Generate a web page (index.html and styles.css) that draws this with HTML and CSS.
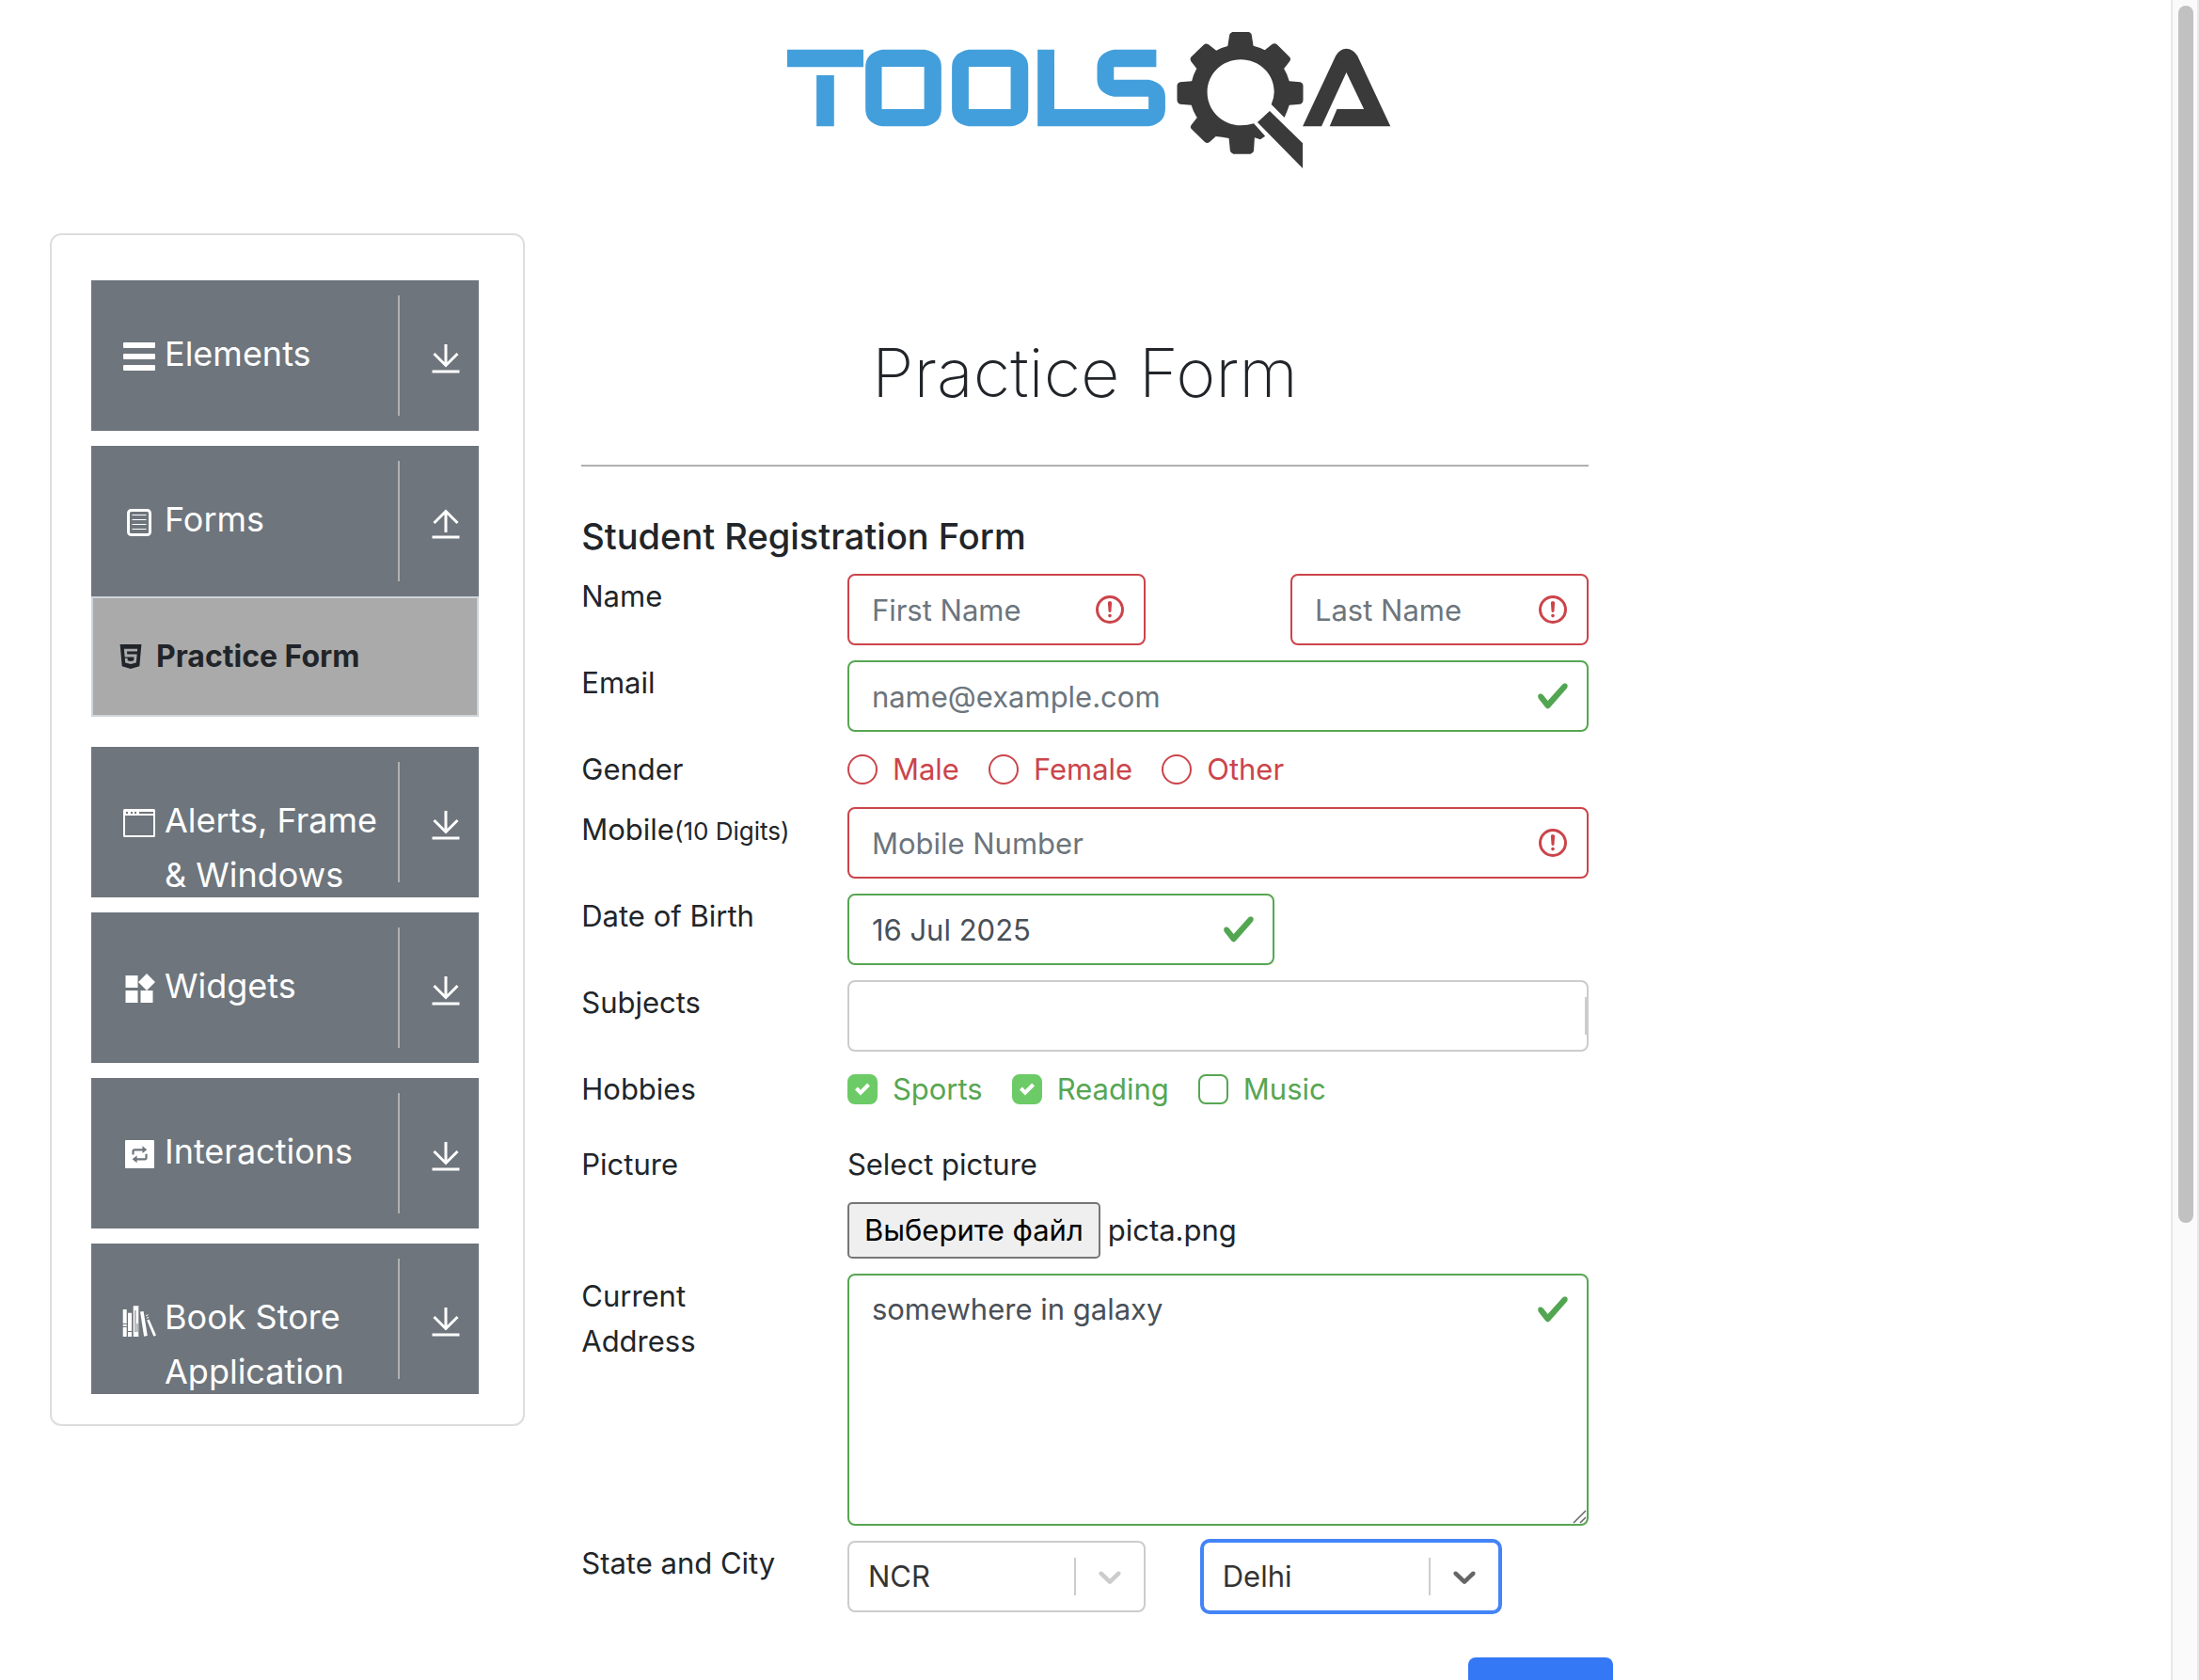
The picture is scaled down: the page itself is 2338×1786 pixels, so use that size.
FILE: index.html
```html
<!DOCTYPE html>
<html lang="en">
<head>
<meta charset="utf-8">
<title>Practice Form</title>
<link rel="stylesheet" href="styles.css">
</head>
<body>
<div class="page">
  <header class="site-header">
    <a href="#" aria-label="ToolsQA home">
      <svg class="logo" viewBox="0 0 1568 540" preserveAspectRatio="none" aria-hidden="true">
        <g fill="#439fdb">
          <path d="M39 98h187v56H39zM111 180h43v163h-43z"/>
          <path fill-rule="evenodd" d="M272 98h104q41 10 41 56v133q0 46-41 56H272q-41-10-41-56V154q0-46 41-56zM271 153v135h104V153z"/>
          <path fill-rule="evenodd" d="M484 98h104q42 10 42 56v133q0 46-42 56H484q-41-10-41-56V154q0-46 41-56zM484 153v135h103V153z"/>
          <path d="M653 98h41v190h231v-40h-85q-41-10-41-56v-38q0-46 41-56h104v56H840v40h85q41 10 41 56v37q0 46-41 56H653z"/>
        </g>
        <g fill="#3a3a3a">
          <path fill-rule="evenodd" d="M1128 42h43q7 3 7 12l4 32q16 5 28 14l18-19q7-5 13 2l29 38q6 8 0 16l-13 22q9 19 13 40l27 3q7 3 7 12v45q0 10-7 13l-27 3q-5 20-12 40l-32-42q7-22 7-40c0-58-37-103-82-103s-82 45-82 104 37 106 82 106q17 0 32-6l28 40-12 11-14-6-2 42q-1 8-8 10h-42q-7-2-8-10l-3-40q-17-5-32-6l-16 19q-6 4-11-1l-33-42q-4-6 0-13l14-23q-9-17-14-40l-28-3q-7-3-7-13v-45q0-9 7-12l29-3q4-22 12-40l-13-22q-5-8 0-16l30-38q6-6 12-1l19 19q12-9 28-14l4-32q0-9 7-12z"/>
          <path d="M1222 294l81 103v80l-111-147z"/>
          <path d="M1303 343l81-225q10-23 26-23t27 23l81 225h-149l18-55h66l-43-117-61 172z"/>
        </g>
      </svg>
    </a>
  </header>

  <main class="layout">
    <nav class="col" aria-label="Sections">
      <div class="accordion">
        <div class="group">
          <button class="group-head" type="button">
            <svg class="icon" viewBox="0 0 36 36"><path fill="currentColor" d="M2 3h32q1 0 1 1v4q0 1-1 1H2q-1 0-1-1V4q0-1 1-1zm0 12h32q1 0 1 1v4q0 1-1 1H2q-1 0-1-1v-4q0-1 1-1zm0 12h32q1 0 1 1v4q0 1-1 1H2q-1 0-1-1v-4q0-1 1-1z"/></svg>
            <span class="group-name">Elements</span>
            <span class="group-toggle"><svg class="icon" viewBox="0 0 36 36"><path class="line" d="M18 5v22M5.500 15 18 27.500 30.500 15M3.500 34h29"/></svg></span>
          </button>
        </div>
        <div class="group">
          <button class="group-head" type="button">
            <svg class="icon" viewBox="0 0 36 36"><rect class="line" x="6.500" y="5.500" width="23" height="26" rx="3"/><path class="hair" d="M10.500 10.500h15M10.500 15.500h15M10.500 20.500h15M10.500 25.500h15"/></svg>
            <span class="group-name">Forms</span>
            <span class="group-toggle"><svg class="icon" viewBox="0 0 36 36"><path class="line" d="M18 29V7M5.500 19 18 6.500 30.500 19M3.500 34h29"/></svg></span>
          </button>
          <a class="group-item" href="#">
            <svg class="icon-small" viewBox="0 0 24 24"><path fill="currentColor" d="M1.500 0h21l-1.910 21.563L11.977 24l-8.564-2.438L1.500 0zm7.031 9.750l-.232-2.718 10.059.003.230-2.622L5.412 4.410l.698 8.010h9.126l-.326 3.426-2.910.804-2.955-.810-.188-2.110H6.248l.330 4.171L12 19.351l5.379-1.443.744-8.157H8.531z"/></svg>
            Practice Form
          </a>
        </div>
        <div class="group">
          <button class="group-head" type="button">
            <svg class="icon" viewBox="0 0 36 36"><path fill="currentColor" fill-rule="evenodd" d="M2.500 3h31q1.500 0 1.500 1.500v27q0 1.500-1.500 1.500h-31Q1 33 1 31.500v-27Q1 3 2.500 3zM3 10v21h30V10zM4 6v2h2V6zM9 6v2h2V6zM13 6v2h2V6zM18 6v2h15V6z"/></svg>
            <span class="group-name">Alerts, Frame &amp; Windows</span>
            <span class="group-toggle"><svg class="icon" viewBox="0 0 36 36"><path class="line" d="M18 5v22M5.500 15 18 27.500 30.500 15M3.500 34h29"/></svg></span>
          </button>
        </div>
        <div class="group">
          <button class="group-head" type="button">
            <svg class="icon" viewBox="0 0 36 36"><path fill="currentColor" d="M3.500 4h13v13h-13zM3.500 20h13v13h-13zM19.500 20h13v13h-13zM26 2l9 9-9 9-9-9z"/></svg>
            <span class="group-name">Widgets</span>
            <span class="group-toggle"><svg class="icon" viewBox="0 0 36 36"><path class="line" d="M18 5v22M5.500 15 18 27.500 30.500 15M3.500 34h29"/></svg></span>
          </button>
        </div>
        <div class="group">
          <button class="group-head" type="button">
            <svg class="icon" viewBox="0 0 36 36"><rect x="3" y="3" width="31" height="30" rx="1" fill="currentColor"/><path d="M11.500 18.500V15q0-1.700 1.700-1.700H22M25.500 17.700v4q0 1.600-1.600 1.600H15" fill="none" stroke="#6e757c" stroke-width="2.200"/><path fill="#6e757c" d="M21.500 9.300l4.700 4-4.700 3.800zM15.600 19.400l-5 3.900 5 3.900z"/></svg>
            <span class="group-name">Interactions</span>
            <span class="group-toggle"><svg class="icon" viewBox="0 0 36 36"><path class="line" d="M18 5v22M5.500 15 18 27.500 30.500 15M3.500 34h29"/></svg></span>
          </button>
        </div>
        <div class="group">
          <button class="group-head" type="button">
            <svg class="icon" viewBox="0 0 36 36"><path fill="currentColor" d="M.7 7h4v29h-4zM6 10.700h4V36H6zM11.700 3.300h5.600V36h-5.600zM19 9.600l3.600-.6 4.200 26-3.700.8zM26.200 18.600l2.300-1.200 7.500 17.100-2.600 1.200z"/><path fill="none" stroke="currentColor" d="M25 14l2.500-1.300M25.800 16.400l2.400-1.200"/><path fill="none" stroke="#6e757c" d="M0 22.500h5M0 25.500h5M5.500 30.500h5M13.900 8v23M16 22v9"/></svg>
            <span class="group-name">Book Store Application</span>
            <span class="group-toggle"><svg class="icon" viewBox="0 0 36 36"><path class="line" d="M18 5v22M5.500 15 18 27.500 30.500 15M3.500 34h29"/></svg></span>
          </button>
        </div>
      </div>
    </nav>

    <section class="col content">
      <h1>Practice Form</h1>
      <form class="form">
        <h2>Student Registration Form</h2>
        <div class="row">
          <label class="span-3" for="first">Name</label>
          <div class="span-4"><input class="control invalid" id="first" type="text" placeholder="First Name"></div>
          <div class="span-4 push"><input class="control invalid" type="text" placeholder="Last Name" aria-label="Last Name"></div>
        </div>
        <div class="row">
          <label class="span-3" for="email">Email</label>
          <div class="span-9"><input class="control valid" id="email" type="email" placeholder="name@example.com"></div>
        </div>
        <div class="row" role="radiogroup" aria-labelledby="gender">
          <span class="span-3" id="gender">Gender</span>
          <div class="span-9 choices bad">
            <label class="choice"><input type="radio" name="gender">Male</label>
            <label class="choice"><input type="radio" name="gender">Female</label>
            <label class="choice"><input type="radio" name="gender">Other</label>
          </div>
        </div>
        <div class="row">
          <label class="span-3" for="mobile">Mobile<small>(10 Digits)</small></label>
          <div class="span-9"><input class="control invalid" id="mobile" type="tel" placeholder="Mobile Number"></div>
        </div>
        <div class="row">
          <label class="span-3" for="dob">Date of Birth</label>
          <div class="span-9"><input class="control valid date" id="dob" type="text" value="16 Jul 2025"></div>
        </div>
        <div class="row">
          <label class="span-3" for="subjects">Subjects</label>
          <div class="span-9"><div class="tags"><input id="subjects" type="text"></div></div>
        </div>
        <div class="row" role="group" aria-labelledby="hobbies">
          <span class="span-3" id="hobbies">Hobbies</span>
          <div class="span-9 choices good">
            <label class="choice"><input type="checkbox" checked>Sports</label>
            <label class="choice"><input type="checkbox" checked>Reading</label>
            <label class="choice"><input type="checkbox">Music</label>
          </div>
        </div>
        <div class="row picture">
          <span class="span-3">Picture</span>
          <div class="span-9">
            <label for="file">Select picture</label>
            <div class="file"><button id="file" type="button">Выберите файл</button><span>picta.png</span></div>
          </div>
        </div>
        <div class="row">
          <label class="span-3 narrow" for="address">Current Address</label>
          <div class="span-9"><textarea class="control valid" id="address">somewhere in galaxy</textarea></div>
        </div>
        <div class="row">
          <label class="span-3" for="state">State and City</label>
          <div class="span-4"><select class="select" id="state"><option>NCR</option></select></div>
          <div class="span-4"><select class="select active" aria-label="City"><option>Delhi</option></select></div>
        </div>
        <div class="actions"><button class="submit" type="submit" aria-label="Submit"></button></div>
      </form>
    </section>
  </main>
</div>
<div class="scrollbar" aria-hidden="true"><div class="thumb"></div></div>
</body>
</html>
```
FILE: styles.css
```css
* { box-sizing: border-box; }

body {
  margin: 0;
  display: flex;
  height: 100vh;
  overflow: hidden;
  background: #fff;
  color: #212529;
  font: 31px/48px Inter, "Liberation Sans", sans-serif;
}

input, select, textarea, button { font: inherit; color: inherit; margin: 0; }

.page { flex: 1; min-width: 0; height: 100%; overflow: hidden; }

.site-header { display: flex; justify-content: center; padding: 20px 0 0 12px; height: 248px; }
.logo { display: block; width: 680px; height: 180px; }

.layout { display: grid; grid-template-columns: 3fr 6fr 3fr; align-items: start; margin: 0 24px 0 23px; }
.col { padding: 0 30px; min-width: 0; }

/* Sidebar */
.accordion {
  display: flex;
  flex-direction: column;
  gap: 16px;
  padding: 48px 47px 32px 42px;
  border: 2px solid #ddd;
  border-radius: 12px;
}
.group-head {
  display: grid;
  grid-template-columns: 36px 1fr 86px;
  column-gap: 9px;
  align-items: start;
  width: 100%;
  height: 160px;
  padding: 0 0 0 33px;
  border: 0;
  overflow: hidden;
  background: #6e757c;
  color: #fff;
  font-size: 36px;
  line-height: 58px;
  text-align: left;
}
.group-name { margin-top: 49px; }
.icon { display: block; width: 36px; height: 36px; margin-top: 63px; }
.group-toggle { height: 128px; margin-top: 16px; padding-left: 31px; border-left: 2px solid #b0b0b0; }
.group-toggle .icon { margin-top: 47px; }
.line, .hair { fill: none; stroke: currentColor; stroke-width: 3; }
.hair { stroke-width: 1; }
.group-item {
  display: flex;
  align-items: center;
  gap: 14px;
  height: 128px;
  margin-bottom: 16px;
  padding-left: 27px;
  border: 2px solid #ced4da;
  background: #aaa;
  color: #212529;
  font-size: 32px;
  font-weight: 700;
  text-decoration: none;
}
.icon-small { width: 26px; height: 26px; }

/* Form */
h1 {
  margin: 0;
  padding: 100px 0 50px;
  border-bottom: 2px solid #b0b0b0;
  font-size: 72px;
  line-height: 96px;
  font-weight: 200;
  text-align: center;
}
h2 { margin: 50px 0 0; font-size: 38px; line-height: 48px; font-weight: 500; }
.form { display: flex; flex-direction: column; gap: 16px; }
.row { display: grid; grid-template-columns: repeat(12, 1fr); margin: 0 -30px; align-items: start; }
.row > * { padding: 0 30px; }
.span-3 { grid-column: span 3; white-space: nowrap; }
.span-4 { grid-column: span 4; }
.span-9 { grid-column: span 9; }
.push { grid-column: 9 / span 4; }
.narrow { white-space: normal; }
small { font-size: 26px; }

.control {
  display: block;
  width: 100%;
  height: 76px;
  padding: 12px 72px 12px 24px;
  border: 2px solid;
  border-radius: 8px;
  background: #fff no-repeat right 18px center / 36px 36px;
  color: #495057;
  outline: 0;
}
.control::placeholder { color: #6c757d; opacity: 1; }
.invalid {
  border-color: #cb444a;
  background-image: url("data:image/svg+xml,%3csvg xmlns='http://www.w3.org/2000/svg' viewBox='0 0 12 12' width='12' height='12' fill='none' stroke='%23cb444a'%3e%3ccircle cx='6' cy='6' r='4.5'/%3e%3cpath stroke-linejoin='round' d='M5.8 3.6h.4L6 6.5z'/%3e%3ccircle cx='6' cy='8.2' r='.6' fill='%23cb444a' stroke='none'/%3e%3c/svg%3e");
}
.valid {
  border-color: #57a652;
  background-image: url("data:image/svg+xml,%3csvg xmlns='http://www.w3.org/2000/svg' viewBox='0 0 8 8' width='8' height='8'%3e%3cpath fill='%2353a651' d='M2.3 6.73L.6 4.53c-.4-1.04.46-1.4 1.1-.8l1.1 1.4 3.4-3.8c.6-.63 1.6-.27 1.2.7l-4 4.6c-.43.5-.8.4-1.1.1z'/%3e%3c/svg%3e");
}
.date { width: 454px; }
textarea.control { height: 268px; resize: vertical; background-position: right 18px top 18px; }
textarea::-webkit-resizer {
  background: url("data:image/svg+xml,%3csvg xmlns='http://www.w3.org/2000/svg' viewBox='0 0 15 15' width='15' height='15'%3e%3cpath stroke='%23666' stroke-width='1.5' d='M1 14L14 1M8 14L14 8'/%3e%3c/svg%3e") no-repeat center;
}

.choices { display: flex; gap: 31px; }
.choice { display: flex; align-items: center; gap: 16px; }
.choice input { appearance: none; width: 32px; height: 32px; border: 2px solid; border-radius: 50%; background: #fff; }
.choice input[type="checkbox"] { border-radius: 8px; }
.choice input:checked {
  border-color: #6ccb66;
  background: #6ccb66 url("data:image/svg+xml,%3csvg xmlns='http://www.w3.org/2000/svg' viewBox='0 0 8 8' width='8' height='8'%3e%3cpath fill='%23fff' d='M6.564.75l-3.59 3.612-1.538-1.55L0 4.26 2.974 7.25 8 2.193z'/%3e%3c/svg%3e") no-repeat center / 16px 16px;
}
.bad { color: #cb444a; }
.good { color: #57a652; }

.tags { display: flex; align-items: center; height: 76px; border: 2px solid #ccc; border-radius: 8px; }
.tags input { flex: 1; min-width: 0; border: 0; outline: 0; background: none; padding: 0 20px; }
.tags::after { content: ""; width: 2px; height: 40px; background: #ccc; }

.picture { padding-top: 16px; }
.picture label { display: block; margin-bottom: 16px; }
.file { display: flex; align-items: center; gap: 8px; }
.file button { height: 60px; padding: 0 16px; border: 2px solid #767676; border-radius: 5px; background: #efefef; color: #000; }

.select {
  display: block;
  appearance: none;
  width: 100%;
  height: 76px;
  padding: 0 80px 0 20px;
  border: 2px solid #ccc;
  border-radius: 8px;
  background:
    url("data:image/svg+xml,%3csvg xmlns='http://www.w3.org/2000/svg' viewBox='0 0 20 20' width='20' height='20'%3e%3cpath fill='%23ccc' d='M4.516 7.548c.436-.446 1.043-.481 1.576 0l3.908 3.747 3.908-3.747c.533-.481 1.141-.446 1.574 0 .436.445.408 1.197 0 1.615-.406.418-4.695 4.502-4.695 4.502-.217.223-.502.335-.787.335s-.57-.112-.789-.335c0 0-4.287-4.084-4.695-4.502s-.436-1.17 0-1.615z'/%3e%3c/svg%3e") no-repeat right 16px center / 40px 40px,
    linear-gradient(#ccc, #ccc) no-repeat right 72px center / 2px 40px,
    #fff;
  color: #333;
  outline: 0;
}
.active {
  border-color: #4384f8;
  box-shadow: 0 0 0 2px #4384f8;
  background-image:
    url("data:image/svg+xml,%3csvg xmlns='http://www.w3.org/2000/svg' viewBox='0 0 20 20' width='20' height='20'%3e%3cpath fill='%23666' d='M4.516 7.548c.436-.446 1.043-.481 1.576 0l3.908 3.747 3.908-3.747c.533-.481 1.141-.446 1.574 0 .436.445.408 1.197 0 1.615-.406.418-4.695 4.502-4.695 4.502-.217.223-.502.335-.787.335s-.57-.112-.789-.335c0 0-4.287-4.084-4.695-4.502s-.436-1.17 0-1.615z'/%3e%3c/svg%3e"),
    linear-gradient(#ccc, #ccc);
}

.actions { display: flex; justify-content: flex-end; margin: 32px -26px 0 0; }
.submit { height: 76px; width: 154px; padding: 0; border: 0; border-radius: 8px; background: #3478f6; color: #fff; }

/* Page scrollbar */
.scrollbar { width: 30px; padding: 6px 4px 0 6px; border: solid #e8e8e8; border-width: 0 2px; background: #fafafa; }
.thumb { width: 16px; height: 72.7%; border-radius: 8px; background: #c1c1c1; }
```
